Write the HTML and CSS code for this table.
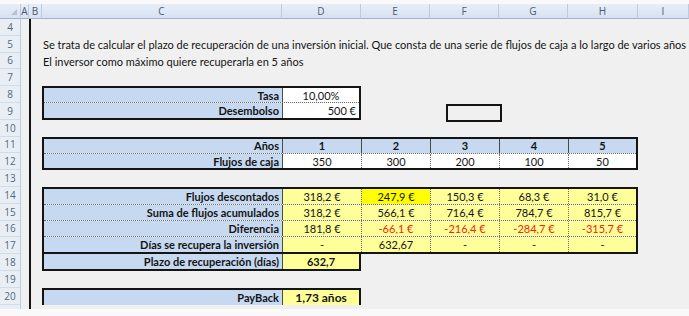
FILE: index.html
```html
<!DOCTYPE html>
<html lang="es">
<head>
<meta charset="utf-8">
<title>Plazo de recuperación</title>
<link rel="stylesheet" href="styles.css">
</head>
<body>
<div class="sheet">
  <div class="col corner"><span class="tri"></span></div>
  <div class="col">A</div>
  <div class="col">B</div>
  <div class="col">C</div>
  <div class="col">D</div>
  <div class="col">E</div>
  <div class="col">F</div>
  <div class="col">G</div>
  <div class="col">H</div>
  <div class="col">I</div>

  <div class="rows">
    <span>4</span><span>5</span><span>6</span><span>7</span><span>8</span><span>9</span>
    <span>10</span><span>11</span><span>12</span><span>13</span><span>14</span><span>15</span>
    <span>16</span><span>17</span><span>18</span><span>19</span><span>20</span><span></span>
  </div>
  <div class="bline"></div>

  <div class="intro l5">Se trata de calcular el plazo de recuperación de una inversión inicial. Que consta de una serie de flujos de caja a lo largo de varios años</div>
  <div class="intro l6">El inversor como máximo quiere recuperarla en 5 años</div>

  <div class="tbl t-rate">
    <div class="row two">
      <div class="cell lbl">Tasa</div>
      <div class="cell w ctr">10,00%</div>
    </div>
    <div class="row two">
      <div class="cell lbl">Desembolso</div>
      <div class="cell w rt">500 €</div>
    </div>
  </div>

  <div class="tbl t-flows">
    <div class="row six">
      <div class="cell lbl">Años</div>
      <div class="cell lbl ctr">1</div>
      <div class="cell lbl ctr">2</div>
      <div class="cell lbl ctr">3</div>
      <div class="cell lbl ctr">4</div>
      <div class="cell lbl ctr">5</div>
    </div>
    <div class="row six">
      <div class="cell lbl">Flujos de caja</div>
      <div class="cell w ctr">350</div>
      <div class="cell w ctr">300</div>
      <div class="cell w ctr">200</div>
      <div class="cell w ctr">100</div>
      <div class="cell w ctr">50</div>
    </div>
  </div>

  <div class="tbl t-disc">
    <div class="row six">
      <div class="cell lbl">Flujos descontados</div>
      <div class="cell y ctr">318,2 €</div>
      <div class="cell yy ctr">247,9 €</div>
      <div class="cell y ctr">150,3 €</div>
      <div class="cell y ctr">68,3 €</div>
      <div class="cell y ctr">31,0 €</div>
    </div>
    <div class="row six">
      <div class="cell lbl">Suma de flujos acumulados</div>
      <div class="cell y ctr">318,2 €</div>
      <div class="cell y ctr">566,1 €</div>
      <div class="cell y ctr">716,4 €</div>
      <div class="cell y ctr">784,7 €</div>
      <div class="cell y ctr">815,7 €</div>
    </div>
    <div class="row six">
      <div class="cell lbl">Diferencia</div>
      <div class="cell y ctr">181,8 €</div>
      <div class="cell y ctr neg">-66,1 €</div>
      <div class="cell y ctr neg">-216,4 €</div>
      <div class="cell y ctr neg">-284,7 €</div>
      <div class="cell y ctr neg">-315,7 €</div>
    </div>
    <div class="row six">
      <div class="cell lbl">Días se recupera la inversión</div>
      <div class="cell y ctr">-</div>
      <div class="cell y ctr">632,67</div>
      <div class="cell y ctr">-</div>
      <div class="cell y ctr">-</div>
      <div class="cell y ctr">-</div>
    </div>
  </div>

  <div class="tbl t-plazo">
    <div class="row two">
      <div class="cell lbl">Plazo de recuperación (días)</div>
      <div class="cell y ctr b">632,7</div>
    </div>
  </div>

  <div class="tbl t-pay">
    <div class="row two">
      <div class="cell lbl">PayBack</div>
      <div class="cell y ctr b big">1,73 años</div>
    </div>
  </div>

  <div class="shape"></div>
</div>
</body>
</html>
```

FILE: styles.css
```css
* {
  box-sizing: border-box;
  margin: 0;
  padding: 0;
}

html,
body {
  background: #f9f9f9;
}

body {
  width: 689px;
  height: 316px;
  overflow: hidden;
  padding-top: 4px;
  font-family: Lato, "Liberation Sans", sans-serif;
  font-size: 11px;
  color: #141414;
}

.sheet {
  position: relative;
  display: grid;
  grid-template-columns: 21px 8px 13px 240px 79px 69px 69px 69px 70px 51px;
  grid-template-rows: 15px repeat(17, 16.8px) 4px;
  background: #f0f0f0;
}

.col {
  display: flex;
  align-items: center;
  justify-content: center;
  background: linear-gradient(#e7eef8, #d6e2f2);
  border-right: 1px solid #bccbdf;
  border-bottom: 1px solid #9fb4cc;
  color: #4b5a6f;
  font-family: "Open Sans", "Liberation Sans", sans-serif;
  font-size: 10px;
}

.corner {
  position: relative;
}

.tri {
  position: absolute;
  right: 3px;
  bottom: 3px;
  width: 0;
  height: 0;
  border-left: 6px solid transparent;
  border-bottom: 6px solid #b5c2d3;
}

.rows {
  grid-column: 1;
  grid-row: 2 / -1;
  display: flex;
  flex-direction: column;
  background: #e9eef5;
  border-right: 1px solid #bccbdf;
}

.rows span {
  flex: none;
  height: 16.8px;
  display: flex;
  align-items: center;
  justify-content: center;
  border-bottom: 1px solid #d2dbe7;
  color: #56667c;
  font-family: "Open Sans", "Liberation Sans", sans-serif;
  font-size: 10px;
}

.rows span:last-child {
  height: 4px;
  border-bottom: none;
}

.bline {
  grid-column: 3;
  grid-row: 2 / -1;
  border-left: 2px solid #141414;
}

.intro {
  grid-column: 4 / -1;
  display: flex;
  align-items: center;
  padding-left: 1px;
  padding-top: 1px;
  white-space: nowrap;
}

.l5 { grid-row: 3; }
.l6 { grid-row: 4; }

.tbl {
  display: flex;
  flex-direction: column;
  border: 2px solid #141414;
}

.t-rate  { grid-column: 4 / 6;  grid-row: 6 / 8; }
.t-flows { grid-column: 4 / 10; grid-row: 9 / 11; }
.t-disc  { grid-column: 4 / 10; grid-row: 12 / 16; }
.t-plazo { grid-column: 4 / 6;  grid-row: 16 / 17; border-top: none; }
.t-pay   { grid-column: 4 / 6;  grid-row: 18 / 19; }

.row {
  flex: 1;
  display: grid;
}

.row + .row {
  border-top: 1px dotted #6f6f6f;
}

.two { grid-template-columns: 238px 1fr; }
.six { grid-template-columns: 238px 79px 69px 69px 69px 1fr; }

.cell {
  display: flex;
  align-items: center;
  padding: 0 3px;
  white-space: nowrap;
}

.cell + .cell {
  border-left: 1px dotted #6f6f6f;
}

.cell.lbl + .cell {
  border-left: 1px solid #4a4a4a;
}

.lbl {
  justify-content: flex-end;
  background: #c6d9f1;
  font-weight: 700;
}

.lbl.ctr { justify-content: center; }

.ctr { justify-content: center; }
.rt  { justify-content: flex-end; }

.w  { background: #ffffff; }
.y  { background: #ffff99; }
.yy { background: #ffff00; }

.neg { color: #f2260f; }
.b { font-weight: 700; }
.big { font-size: 12px; }

.shape {
  position: absolute;
  left: 446px;
  top: 100px;
  width: 56px;
  height: 18px;
  border: 2px solid #141414;
}
```
